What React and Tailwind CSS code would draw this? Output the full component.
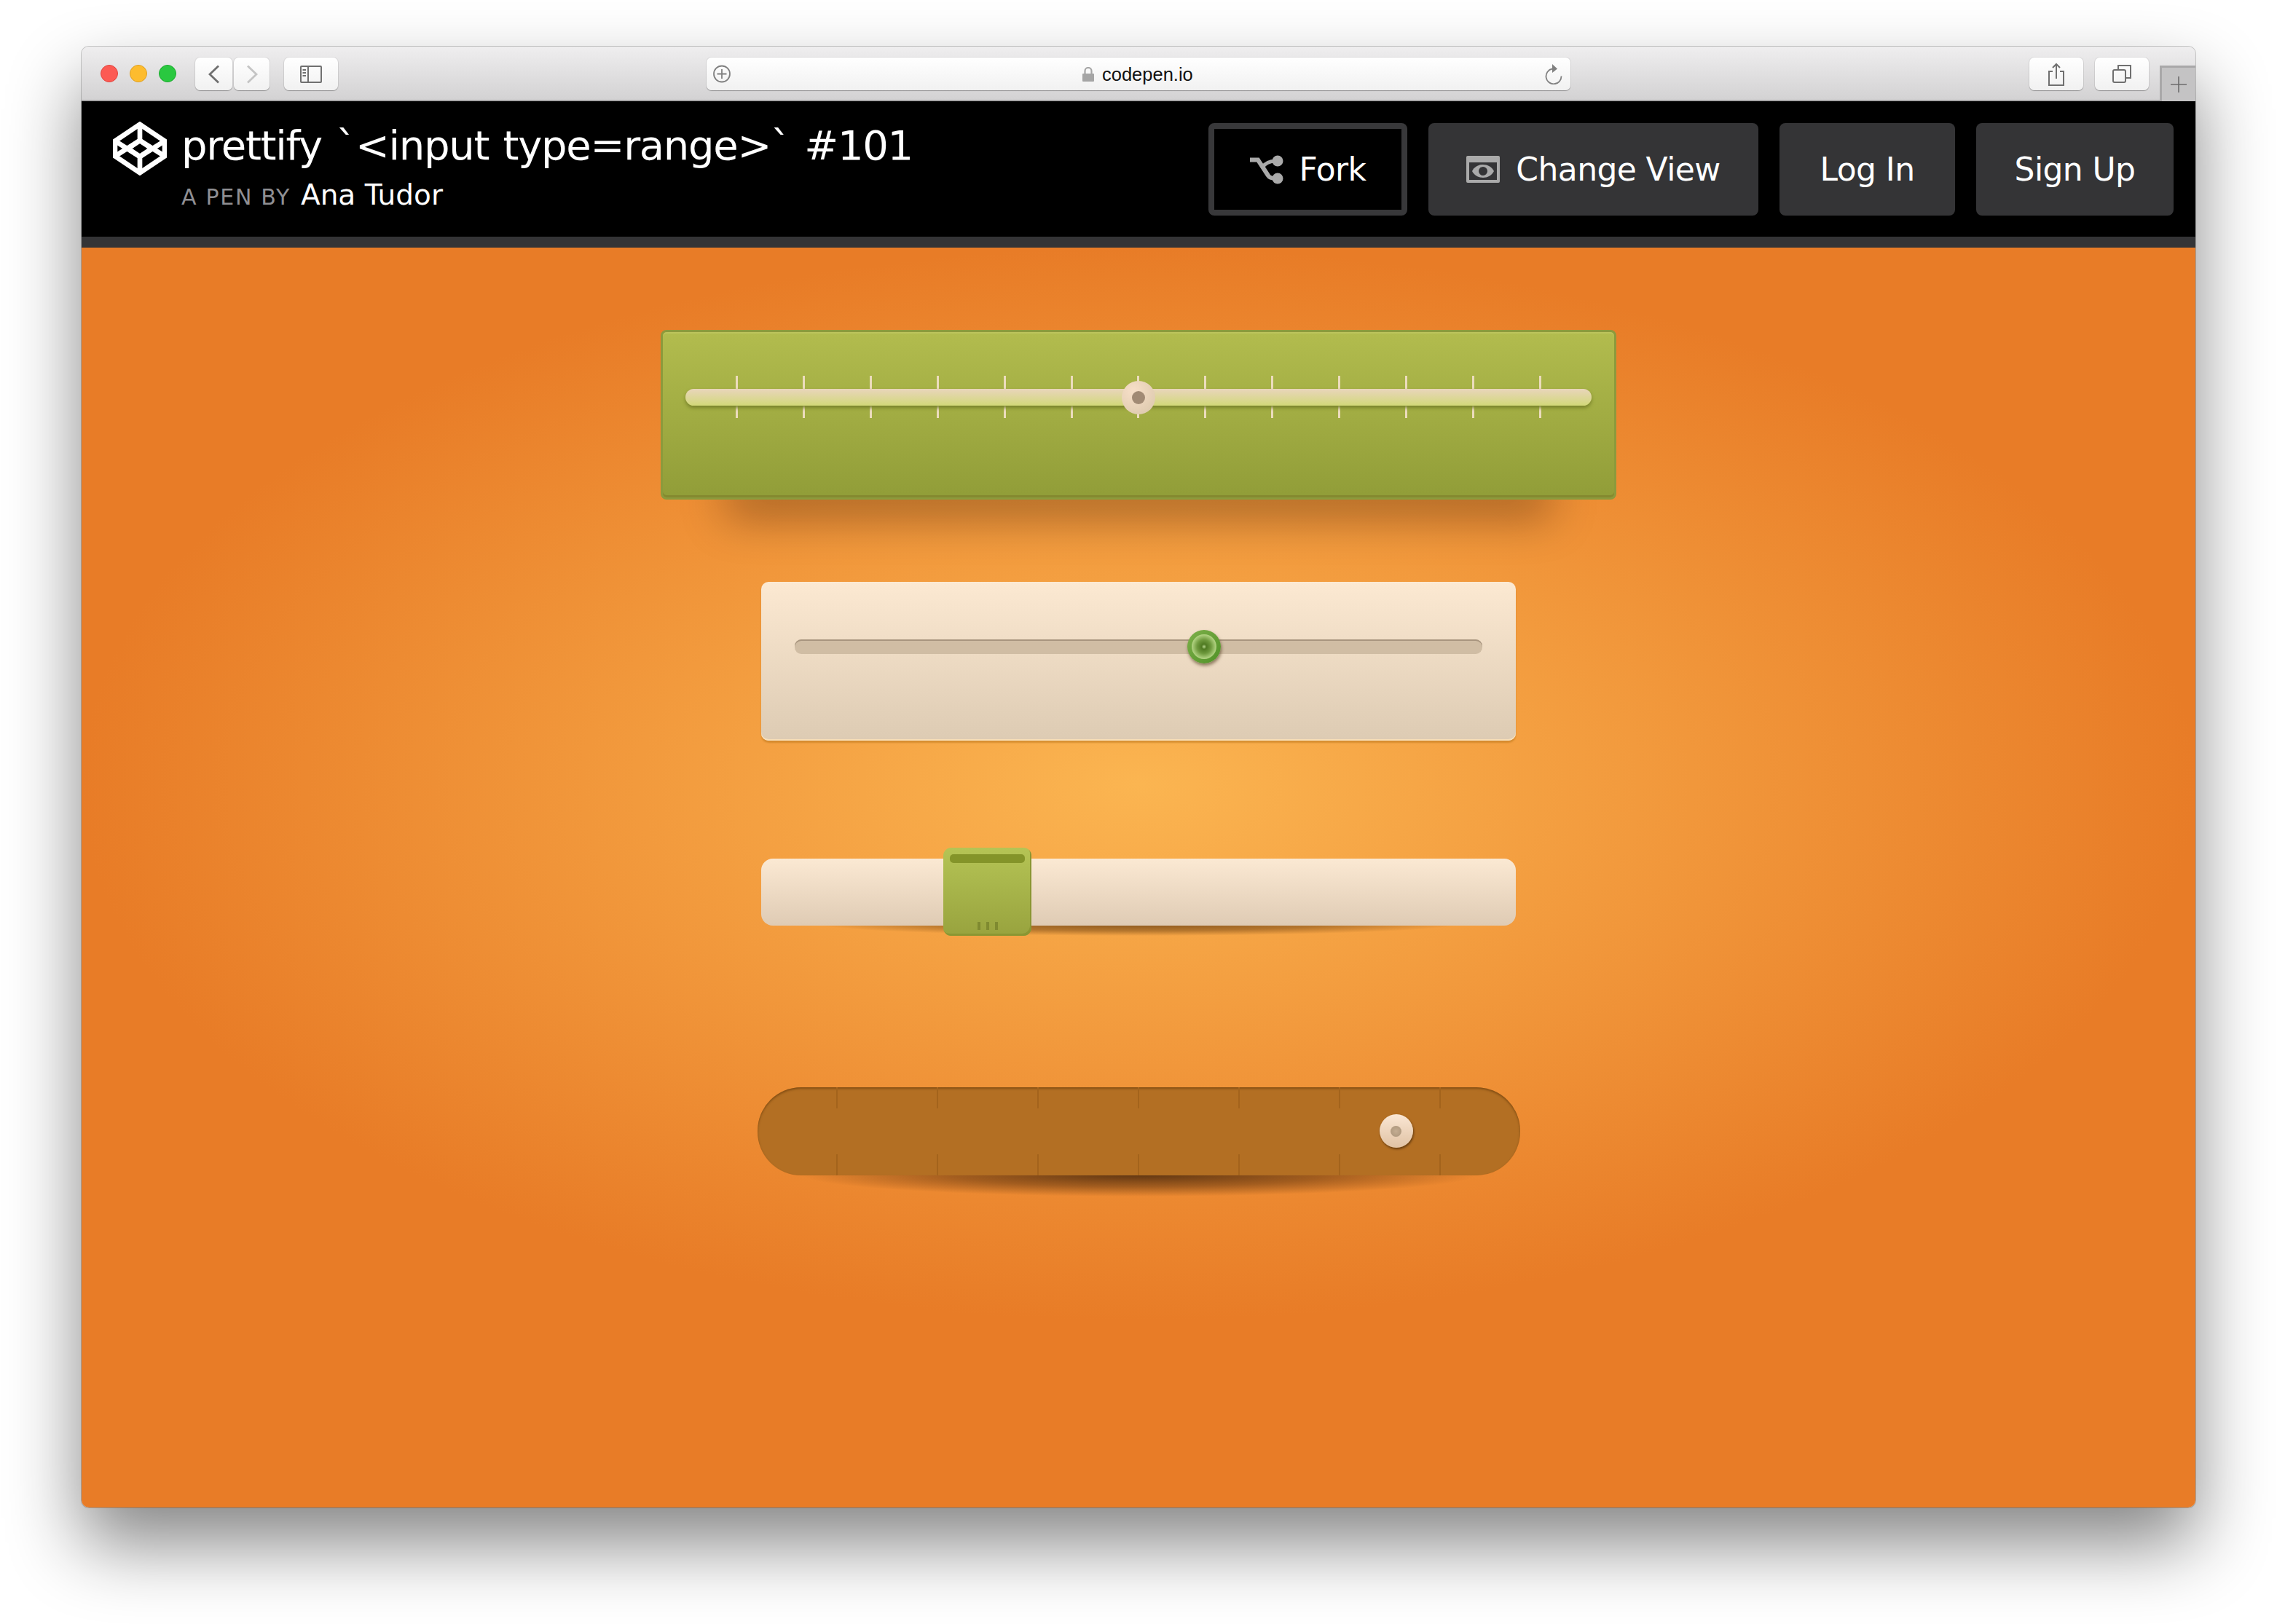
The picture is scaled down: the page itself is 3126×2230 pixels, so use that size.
import React from "react";

const F = "font-['DejaVu_Sans',sans-serif]";

function Logo() {
  return (
    <svg width="74" height="74" viewBox="0 0 100 100" fill="none" stroke="#fff" strokeWidth="9" strokeLinejoin="miter" className="shrink-0">
      <path d="M50 5 96 36V64L50 95 4 64V36Z" />
      <path d="M50 35 72 50 50 65 28 50Z" />
      <path d="M50 5V35M50 65V95M4 36 50 65 96 36M4 64 50 35 96 64" />
    </svg>
  );
}

function ForkIcon() {
  return (
    <svg width="46" height="40" viewBox="0 0 46 40" className="shrink-0">
      <path d="M0 6.5H11L25 28Q27 32 36 32" fill="none" stroke="#aaa" strokeWidth="6" />
      <path d="M16 18Q22 8 36 8" fill="none" stroke="#aaa" strokeWidth="5" />
      <circle cx="38" cy="8" r="7.5" fill="#aaa" />
      <circle cx="38" cy="32" r="7.5" fill="#aaa" />
    </svg>
  );
}

function ViewIcon() {
  return (
    <svg width="46" height="37" viewBox="0 0 46 37" className="shrink-0">
      <rect width="46" height="37" rx="2" fill="#aaa" />
      <rect x="4" y="9" width="38" height="24" fill="#343436" />
      <path d="M8 21C14 9 32 9 38 21 32 33 14 33 8 21Z" fill="#aaa" />
      <circle cx="23" cy="21" r="6" fill="#343436" />
    </svg>
  );
}

function ToolBtn({ className, children }) {
  return (
    <div className={`h-[45px] flex items-center rounded-[7px] bg-gradient-to-b from-[#ffffff] to-[#f1f1f1] shadow-[0_1px_1px_rgba(0,0,0,0.3),0_0_0_1px_rgba(0,0,0,0.06)] ${className}`}>
      {children}
    </div>
  );
}

function TitleBar() {
  return (
    <div className="relative h-[75px] flex items-start pt-[15px] pl-[26px] rounded-t-[10px] bg-gradient-to-b from-[#efeeef] to-[#d3d2d3] border-b-2 border-[#a9a8a9]">
      <div className="flex items-center gap-[16px] mt-[10px]">
        <div className="w-[24px] h-[24px] rounded-full bg-[#fc5a53] border border-[#e1463f]" />
        <div className="w-[24px] h-[24px] rounded-full bg-[#fdbc2e] border border-[#dfa023]" />
        <div className="w-[24px] h-[24px] rounded-full bg-[#2ac840] border border-[#1dab2f]" />
      </div>
      <ToolBtn className="w-[51px] ml-[26px] justify-center">
        <svg width="16" height="26" viewBox="0 0 16 26" fill="none" stroke="#6f6f6f" strokeWidth="2.8"><path d="M14 1.5 2 13 14 24.5" /></svg>
      </ToolBtn>
      <ToolBtn className="w-[49px] ml-[2px] justify-center">
        <svg width="16" height="26" viewBox="0 0 16 26" fill="none" stroke="#c4c4c4" strokeWidth="2.8"><path d="M2 1.5 14 13 2 24.5" /></svg>
      </ToolBtn>
      <ToolBtn className="w-[74px] ml-[20px] justify-center">
        <svg width="30" height="24" viewBox="0 0 30 24" fill="none" stroke="#707070" strokeWidth="2"><rect x="1" y="1" width="28" height="22" rx="1" /><path d="M11 1V23" /><path d="M3.5 6H8M3.5 10H8M3.5 14H8" strokeWidth="1.8" /></svg>
      </ToolBtn>
      <ToolBtn className="w-[1186px] ml-[506px]">
        <svg width="24" height="25" viewBox="0 0 24 25" fill="none" stroke="#808080" strokeWidth="1.8" className="ml-[9px]"><circle cx="12" cy="12.5" r="11" /><path d="M12 6V19M5.5 12.5H18.5" /></svg>
        <svg width="16" height="20" viewBox="0 0 16 20" className="ml-[483px]"><rect x="0" y="9" width="16" height="11" rx="1" fill="#a5a5a5" /><path d="M3.5 10V5.5a4.5 4.5 0 0 1 9 0V10" fill="none" stroke="#a5a5a5" strokeWidth="2.2" /></svg>
        <span className="ml-[11px] mt-[2px] text-[25.5px] leading-none text-[#111] font-['Liberation_Sans',sans-serif]">codepen.io</span>
        <svg width="25" height="28" viewBox="0 0 25 28" fill="none" stroke="#808080" strokeWidth="1.8" className="ml-auto mr-[11px]"><path d="M11 6.5a10.5 10.5 0 1 0 12.5 10" /><path d="M11 0 18 6.5 11 12Z" fill="#808080" stroke="none" /></svg>
      </ToolBtn>
      <ToolBtn className="w-[74px] ml-[630px] justify-center">
        <svg width="24" height="32" viewBox="0 0 24 32" fill="none" stroke="#707070" strokeWidth="2"><path d="M7 12H2V31H22V12H17M12 22V2M7 7 12 2 17 7" /></svg>
      </ToolBtn>
      <ToolBtn className="w-[74px] ml-[16px] justify-center">
        <svg width="26" height="25" viewBox="0 0 26 25" fill="none" stroke="#707070" strokeWidth="2"><rect x="1" y="7" width="17" height="17" rx="2" /><path d="M8 7V1H25V18H18" /></svg>
      </ToolBtn>
      <div className="absolute right-0 -bottom-[2px] w-[49px] h-[49px] bg-[#c4c3c4] border-l-[3px] border-t-[3px] border-[#a9a8a9] flex items-center justify-center">
        <svg width="22" height="22" viewBox="0 0 22 22" stroke="#6c6c6c" strokeWidth="1.6"><path d="M11 0V22M0 11H22" /></svg>
      </div>
    </div>
  );
}

function HeaderButton({ className, children }) {
  return (
    <div className={`h-[127px] rounded-[8px] flex items-center justify-center gap-[22px] text-white text-[44px] tracking-[-0.6px] leading-none ${className}`}>
      {children}
    </div>
  );
}

function Header() {
  return (
    <div className={`h-[201px] bg-black flex items-start justify-between pr-[30px] ${F} border-b-[15px] border-[#343436]`}>
      <div className="flex items-start pl-[43px] pt-[28px] gap-[20px]">
        <Logo />
        <div className="flex flex-col -mt-[3px]">
          <div className="text-[56px] tracking-[-1.3px] [word-spacing:3px] leading-[72px] text-white whitespace-nowrap">prettify `&lt;input type=range&gt;` #101</div>
          <div className="flex items-baseline gap-[14px] mt-[10px] whitespace-nowrap">
            <span className="text-[30px] tracking-[1.7px] text-[#8f8f93] leading-[44px]">A PEN BY</span>
            <span className="text-[39px] text-white leading-[44px]">Ana Tudor</span>
          </div>
        </div>
      </div>
      <div className="flex items-start gap-[29px] pt-[30px]">
        <HeaderButton className="w-[273px] bg-black border-[8px] border-[#38383a]"><ForkIcon /><span>Fork</span></HeaderButton>
        <HeaderButton className="w-[453px] bg-[#343436]"><ViewIcon /><span>Change View</span></HeaderButton>
        <HeaderButton className="w-[241px] bg-[#343436]"><span>Log In</span></HeaderButton>
        <HeaderButton className="w-[271px] bg-[#343436]"><span>Sign Up</span></HeaderButton>
      </div>
    </div>
  );
}

const ticks13 = [0, 1, 2, 3, 4, 5, 6, 7, 8, 9, 10, 11, 12];
const ticks7 = [0, 1, 2, 3, 4, 5, 6];

function SliderOne() {
  return (
    <div className="relative w-[1312px] h-[233px] rounded-[8px] border-[3px] border-[#8c9a3c] bg-gradient-to-b from-[#b2bc4e] to-[#919d38] pt-[78px] px-[31px] shadow-[inset_0_2px_0_#bcc45c,0_114px_60px_-90px_rgba(20,5,0,0.34),inset_0_-3px_0_#84892f]">
      <div className="relative h-[23px]">
        <div className="absolute left-[69px] right-[69px] -top-[18px] h-[58px] flex justify-between">
          {ticks13.map((i) => <div key={i} className="w-[3px] h-full bg-[#ecdcbd]" />)}
        </div>
        <div className="absolute inset-0 rounded-[12px] bg-gradient-to-b from-[#e9d5ba] to-[#d2d878] shadow-[0_3px_5px_#77802a]" />
        <div className="absolute left-1/2 top-1/2 -translate-x-1/2 -translate-y-1/2 w-[46px] h-[46px] rounded-full bg-[radial-gradient(circle_at_35%_30%,#f7dfc8,#d9c6aa)] flex items-center justify-center">
          <div className="w-[18px] h-[18px] rounded-full bg-[#a18a74]" />
        </div>
      </div>
    </div>
  );
}

function SliderTwo() {
  return (
    <div className="relative w-[1036px] h-[218px] mt-[113px] rounded-[10px] bg-gradient-to-b from-[#fce9d2] to-[#ddcbb3] pt-[79px] px-[46px] shadow-[inset_0_-2px_0_#f8dfb8,0_3px_2px_rgba(190,120,30,0.55)]">
      <div className="relative h-[20px] rounded-[9px] bg-[#d0bda4] shadow-[inset_0_2px_0_#a8957f]">
        <div className="absolute left-[539px] -top-[13px] w-[46px] h-[46px] rounded-full bg-gradient-to-br from-[#7eb04a] to-[#4f9126] shadow-[1px_3px_4px_rgba(60,40,10,0.55)] flex items-center justify-center">
          <div className="w-[34px] h-[34px] rounded-full bg-[radial-gradient(circle,#b8d890_0%,#4f7a22_14%,#6f9a3e_40%,#a8cb78_65%,#c8e096_80%)]" />
        </div>
      </div>
    </div>
  );
}

function SliderThree() {
  return (
    <div className="relative w-[1036px] h-[92px] mt-[162px]">
      <div className="absolute left-[75px] right-[75px] top-[72px] h-[34px] rounded-[50%] bg-[radial-gradient(ellipse_closest-side,rgba(60,30,0,0.6),rgba(60,30,0,0.35)_60%,rgba(60,30,0,0))]" />
      <div className="relative h-full rounded-[16px] bg-gradient-to-b from-[#fbe9d3] to-[#dfcbb4]">
        <div className="absolute left-[250px] -top-[15px] w-[121px] h-[121px] rounded-[11px] bg-gradient-to-b from-[#b5c455] to-[#98a33e] shadow-[inset_-2px_-3px_0_#8a9632] pt-[9px] pl-[9px]">
          <div className="w-[103px] h-[12px] rounded-[5px] bg-[#849429]" />
          <div className="absolute left-[47px] top-[102px] flex gap-[8px]">
            <div className="w-[4px] h-[11px] bg-[#7f8a30]" />
            <div className="w-[4px] h-[11px] bg-[#7f8a30]" />
            <div className="w-[4px] h-[11px] bg-[#7f8a30]" />
          </div>
        </div>
      </div>
    </div>
  );
}

function SliderFour() {
  return (
    <div className="relative w-[1047px] h-[121px] mt-[222px]">
      <div className="absolute left-[60px] right-[60px] top-[90px] h-[60px] rounded-[50%] bg-[radial-gradient(ellipse_closest-side,rgba(40,20,5,0.72),rgba(60,30,5,0.42)_55%,rgba(60,30,0,0)_100%)]" />
      <div className="relative h-full rounded-[60px] bg-[#b36f23] shadow-[inset_0_2px_3px_rgba(90,50,5,0.55)]">
        <div className="absolute left-[108px] right-[108px] inset-y-0 flex justify-between">
          {ticks7.map((i) => (
            <div key={i} className="w-[2px] h-full flex flex-col justify-between">
              <div className="h-[29px] bg-[#a3631c]" />
              <div className="h-[29px] bg-[#a3631c]" />
            </div>
          ))}
        </div>
        <div className="absolute left-[854px] top-[37px] w-[46px] h-[46px] rounded-full bg-gradient-to-b from-[#fae7d4] to-[#e0c2a4] shadow-[1px_2px_3px_rgba(50,25,0,0.6)] flex items-center justify-center">
          <div className="w-[15px] h-[15px] rounded-full bg-[radial-gradient(circle,#c4ad92,#a99379)]" />
        </div>
      </div>
    </div>
  );
}

export default function App() {
  return (
    <div className="w-[3126px] h-[2230px] bg-white pt-[64px] pl-[112px] overflow-hidden">
      <div className="w-[2902px] h-[2006px] rounded-[10px] flex flex-col shadow-[0_50px_100px_rgba(0,0,0,0.48),0_0_0_1px_rgba(0,0,0,0.2)]">
        <TitleBar />
        <Header />
        <div className="flex-1 rounded-b-[10px] flex flex-col items-center pt-[113px] bg-[radial-gradient(ellipse_1451px_737px_at_50%_737px,#fbb551,#e87c27)]">
          <SliderOne />
          <SliderTwo />
          <SliderThree />
          <SliderFour />
        </div>
      </div>
    </div>
  );
}
